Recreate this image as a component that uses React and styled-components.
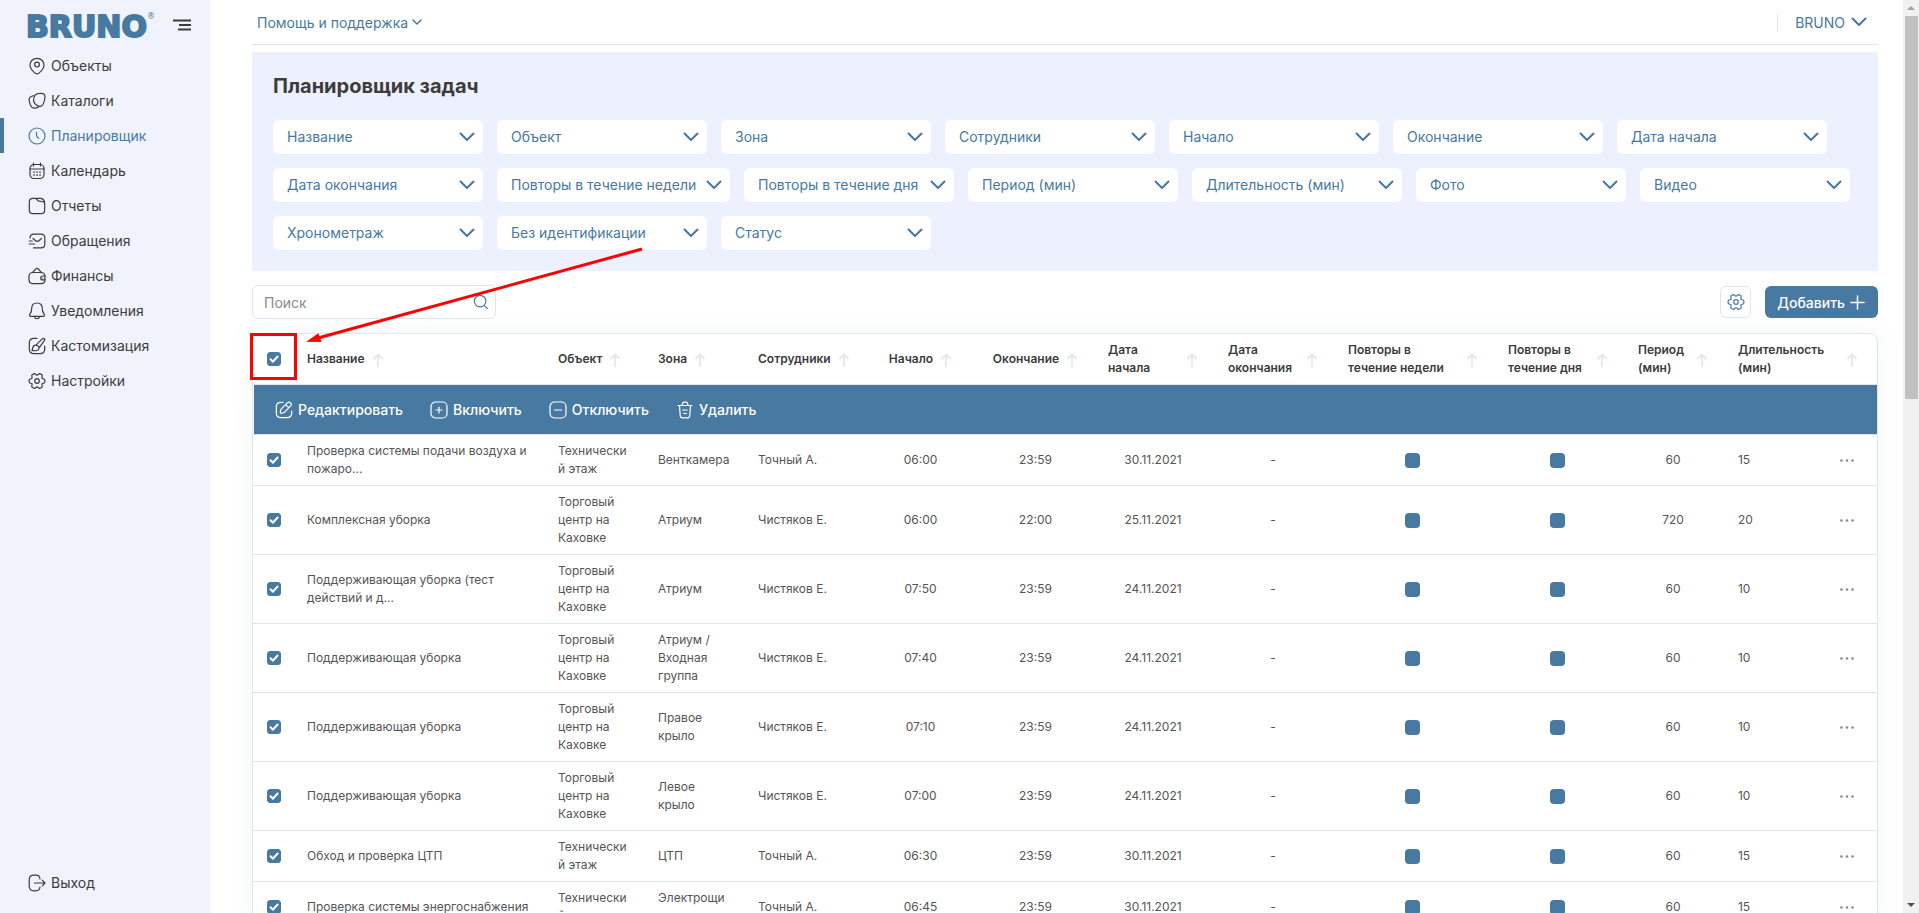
import React, { useState } from "react";
import styled, { createGlobalStyle, css } from "styled-components";

const blue = "#4879a1";
const line = "#dfe4ed";

const GlobalStyle = createGlobalStyle`
  * {
    box-sizing: border-box;
  }

  body {
    margin: 0;
    background: #fff;
    color: #3c3c3c;
    font-family: Inter, "Liberation Sans", sans-serif;
    font-size: 14px;
    overflow: hidden;
  }

  button, input, select {
    font: inherit;
    color: inherit;
  }

  button {
    cursor: pointer;
  }
`;

const Layout = styled.div`
  display: flex;
  height: 100vh;
`;

const Sidebar = styled.aside`
  display: flex;
  flex-direction: column;
  flex: 0 0 210px;
  padding-bottom: 13px;
  background: #f0f3fc;
`;

const Brand = styled.div`
  display: flex;
  align-items: center;
  justify-content: space-between;
  height: 48px;
  padding: 6px 19px 0 26px;
`;

const Logo = styled.a`
  display: flex;
  color: ${blue};
  font-family: "DejaVu Sans", sans-serif;
  font-size: 30px;
  font-weight: 700;
  line-height: 36px;
  text-decoration: none;
  -webkit-text-stroke: 2px ${blue};

  sup {
    font-size: 8px;
    font-weight: 400;
    line-height: 16px;
    -webkit-text-stroke: 0;
  }
`;

const PlainButton = styled.button`
  display: flex;
  align-items: center;
  padding: 0;
  border: 0;
  background: none;
`;

const Menu = styled.nav`
  display: flex;
  flex-direction: column;
  flex: 1;
`;

const MenuLink = styled.a`
  display: flex;
  align-items: center;
  gap: 5px;
  height: 35px;
  padding-left: 24px;
  border-left: 4px solid transparent;
  color: #3c3c3c;
  text-decoration: none;

  ${(props) =>
    props.$active &&
    css`
      border-left-color: ${blue};
      color: ${blue};
    `}

  ${(props) =>
    props.$last &&
    css`
      margin-top: auto;
    `}
`;

const Main = styled.main`
  position: relative;
  flex: 1;
  min-width: 0;
  padding: 0 25px 0 42px;
  overflow: hidden;
`;

const Topbar = styled.header`
  display: flex;
  align-items: center;
  justify-content: space-between;
  height: 45px;
  padding: 0 11px 0 5px;
  border-bottom: 1px solid ${line};
  color: ${blue};
`;

const TopbarButton = styled(PlainButton)`
  gap: ${(props) => props.$gap || 4}px;
`;

const Account = styled.div`
  display: flex;
  padding-left: 17px;
  border-left: 1px solid ${line};
`;

const FilterPanel = styled.section`
  margin-top: 7px;
  padding: 21px;
  background: #ecf1fd;

  h1 {
    margin: 0 0 21px;
    font-size: 20px;
    font-weight: 700;
    line-height: 26px;
  }
`;

const Filters = styled.div`
  display: flex;
  flex-wrap: wrap;
  gap: 14px;
`;

const Filter = styled.label`
  position: relative;
  display: flex;
  min-width: 210px;
  color: ${blue};

  select {
    flex: 1;
    height: 34px;
    padding: 0 33px 1px 14px;
    border: 0;
    border-radius: 6px;
    background: #fff;
    appearance: none;
  }

  svg {
    position: absolute;
    top: 10px;
    right: 8px;
    pointer-events: none;
  }
`;

const Toolbar = styled.div`
  display: flex;
  align-items: center;
  justify-content: space-between;
  margin: 14px 0;
`;

const Search = styled.label`
  display: flex;
  align-items: center;
  width: 244px;
  height: 34px;
  padding: 0 6px 0 11px;
  border: 1px solid ${line};
  border-radius: 6px;
  color: ${blue};

  input {
    flex: 1;
    min-width: 0;
    padding: 0;
    border: 0;
    outline: 0;
    background: none;
  }

  input::placeholder {
    color: #8a8a8a;
    opacity: 1;
  }
`;

const ToolbarActions = styled.div`
  display: flex;
  gap: 14px;
`;

const SettingsButton = styled.button`
  display: flex;
  align-items: center;
  justify-content: center;
  width: 31px;
  height: 32px;
  padding: 0;
  border: 1px solid ${line};
  border-radius: 6px;
  background: #fff;
  color: ${blue};
`;

const AddButton = styled.button`
  display: flex;
  align-items: center;
  gap: 5px;
  height: 32px;
  padding: 0 13px 0 12px;
  border: 0;
  border-radius: 6px;
  background: ${blue};
  color: #fff;
  font-weight: 500;
`;

const TableCard = styled.div`
  border: 1px solid ${line};
  border-radius: 8px;
  overflow: hidden;
  box-shadow: 0 0 24px rgba(120, 150, 140, 0.09);
`;

const Table = styled.table`
  width: 100%;
  border-collapse: separate;
  border-spacing: 0;
  table-layout: fixed;
  font-size: 12px;
  line-height: 18px;

  th, td {
    padding: 7px 0 7px 15px;
    border-bottom: 1px solid ${line};
    text-align: left;
    overflow-wrap: anywhere;
  }

  th {
    padding-right: 15px;
    font-weight: 600;
  }

  th:last-child {
    padding-right: 19px;
  }

  td {
    color: #555;
  }

  tbody tr:not(:first-child) td {
    padding-right: 12px;
  }
`;

const HeadCell = styled.div`
  display: flex;
  align-items: center;
  justify-content: ${(props) => (props.$center ? "center" : "flex-start")};
  gap: 7px;

  button {
    flex: none;
    margin-top: 2px;
  }
`;

const Title = styled.span`
  overflow-wrap: normal;
  ${(props) => props.$grow && "flex: 1;"}
`;

const Cell = styled.td`
  ${(props) =>
    props.$center &&
    css`
      && {
        padding-left: 12px;
        text-align: center;
      }
    `}
`;

const CheckCell = styled.td`
  && {
    padding: 0 0 0 14px;
  }
`;

const Checkbox = styled.input`
  display: block;
  width: 14px;
  height: 14px;
  margin: 0;
  border: 1px solid ${blue};
  border-radius: 3px;
  appearance: none;
  background: #fff;

  &:checked {
    background: ${blue}
      url("data:image/svg+xml,%3Csvg xmlns='http://www.w3.org/2000/svg' viewBox='0 0 12 12' fill='none' stroke='white' stroke-width='2' stroke-linecap='round' stroke-linejoin='round'%3E%3Cpath d='M2.5 6.3 5 8.7 9.6 3.5'/%3E%3C/svg%3E")
      center / 12px 12px no-repeat;
  }
`;

const BulkCell = styled.td`
  && {
    padding: 0 0 0 1px;
  }
`;

const BulkBar = styled.div`
  display: flex;
  align-items: center;
  gap: 27px;
  height: 49px;
  padding-left: 21px;
  background: ${blue};
  color: #fff;
  font-size: 14px;
  font-weight: 500;
`;

const BulkButton = styled(PlainButton)`
  gap: 5px;
`;

const Mark = styled.span`
  display: inline-block;
  width: 15px;
  height: 15px;
  border-radius: 4px;
  background: ${blue};
  vertical-align: middle;
`;

const MoreButton = styled(PlainButton)`
  margin: 0 auto;
  color: #8a8a8a;
`;

const Scrollbar = styled.div`
  display: flex;
  flex-direction: column;
  justify-content: space-between;
  align-items: center;
  flex: 0 0 16px;
  background: #f1f1f1;
  color: #a3a3a3;
`;

const Thumb = styled.div`
  flex: 0 0 42%;
  width: 13px;
  margin-bottom: auto;
  background: #c1c1c1;
`;

// red frame and arrow over the page
const Callout = styled.svg`
  position: absolute;
  top: 240px;
  left: 38px;
  pointer-events: none;
`;

const Icon = ({ size = 18, width = 1.2, children }) => (
  <svg
    width={size}
    height={size}
    viewBox="0 0 18 18"
    fill="none"
    stroke="currentColor"
    strokeWidth={width}
    strokeLinecap="round"
    strokeLinejoin="round"
    aria-hidden="true"
  >
    {children}
  </svg>
);

const Chevron = ({ small }) => (
  <svg width={small ? 10 : 16} height={small ? 6 : 14} viewBox={small ? "0 0 10 6" : "0 0 16 14"} fill="none" stroke="currentColor" strokeWidth={small ? 1.5 : 2} strokeLinecap="round" strokeLinejoin="round" aria-hidden="true">
    <path d={small ? "M1 1l4 4 4-4" : "M1.5 3.5L8 10l6.5-6.5"} />
  </svg>
);

// six-lobed cog outline
const gearPoints = Array.from({ length: 72 }, (_, i) => {
  const angle = (i * Math.PI) / 36;
  const radius = 7.1 + 1.1 * Math.cos(angle * 6) - 0.3 * Math.cos(angle * 12);
  return `${(9 + radius * Math.cos(angle)).toFixed(2)},${(9 + radius * Math.sin(angle)).toFixed(2)}`;
}).join(" ");

const icons = {
  pin: (
    <>
      <path d="M9 1.3c-4 0-7 2.9-7 6.7 0 3.7 3 6.400 5 8.100 1.200 1 2.800 1 4 0 2-1.700 5-4.400 5-8.100 0-3.800-3-6.700-7-6.700z" />
      <circle cx="9" cy="7.6" r="2.4" />
    </>
  ),
  catalog: (
    <>
      <path d="M9.300 1.800c2-.6 4-.6 5.700-.1 1.400.4 2 1.300 2 2.800-.1 3.300-.9 6.400-2.300 8.500-.8 1.200-2 1.600-3.300 1.300-2-.4-3.600-1.400-4.700-3-1.700-2.500-1-5.800.4-8.100.5-.8 1.200-1.200 2.200-1.400z" />
      <path d="M5.600 3.600C4 4.200 1.800 4.900 1.300 6.200c-.5 1.800.4 5.500 1.900 8.300 1.200 2.400 5 2 7.400.5" />
    </>
  ),
  clock: (
    <>
      <circle cx="9" cy="9" r="8" />
      <path d="M8.500 5.300v3.300c0 .8.3 1.300 2.300 2.800" />
    </>
  ),
  calendar: (
    <>
      <rect x="2" y="2.5" width="14" height="14" rx="4" />
      <path d="M2 7h14M5.500 1v3M12.500 1v3" />
      <path d="M6 10h.1M9 10h.1M12 10h.1M6 13h.1M9 13h.1M12 13h.1" strokeWidth="1.7" />
    </>
  ),
  report: (
    <path d="M9 1.300H5C2.500 1.300 1.300 2.500 1.300 5v8c0 2.500 1.200 3.700 3.700 3.700h8c2.500 0 3.700-1.200 3.700-3.700V6.500c0-3-1.700-5.200-4.700-5.200H7.500c1.500.4 1.600 2.700 3.500 2.900 2.200.2 4.900-.3 5.600 2" />
  ),
  mail: (
    <>
      <path d="M2 6c0-2.700 1.300-3.900 4-3.900h7c2.700 0 3.800 1.200 3.800 3.900v6c0 2.700-1.100 3.900-3.800 3.900H5.500M1.200 9h3M1.200 12h5.500" />
      <path d="M5 6.500l2 1.800c1.500 1.400 3 1.400 4.500 0l2-1.800" />
    </>
  ),
  wallet: (
    <>
      <path d="M5 5.500h8c2.500 0 4 1.400 4 4v3c0 2.700-1.500 4.200-4 4.200H5c-2.500 0-4-1.500-4-4.200v-3c0-2.600 1.500-4 4-4zM4.700 5.500l2.800-3.400c.9-.9 2.100-.9 3 0l2.800 3.400" />
      <path d="M17 9h-2.500c-2.400 0-2.400 3.900 0 3.900H17M14.700 11h.1" />
    </>
  ),
  bell: (
    <>
      <path d="M9 1C5.500 1 3.700 3.500 3.700 6.500c0 3-.6 4-1.800 5.600-.9 1.300-.2 2.300 1.100 2.300h12c1.300 0 2-1 1.100-2.300-1.200-1.600-1.800-2.600-1.800-5.600C14.300 3.500 12.500 1 9 1z" />
      <path d="M6.500 14.700c.4 2.700 4.600 2.700 5 0" />
    </>
  ),
  brush: (
    <>
      <path d="M9 1.300H6c-3.200 0-4.700 1.500-4.700 4.700v6c0 3.200 1.500 4.700 4.700 4.700h6c3.200 0 4.700-1.500 4.700-4.700V9" />
      <path d="M8 8.200l6-6c1.700-1.700 3.500-.3 2.300 1.500l-5 7M8 8.200c1.600.2 2.700 1.100 3.300 2.500M8 8.200c-2.300-.1-3 1.300-3.200 2.700-.1 1-.4 1.700-.9 2.400 3.500.9 7.200.6 7.400-2.600" />
    </>
  ),
  gear: (
    <>
      <polygon points={gearPoints} />
      <circle cx="9" cy="9" r="2.3" />
    </>
  ),
  exit: (
    <>
      <path d="M12 5C11.800 2.300 10.600 1.200 7.500 1.200H6C2.500 1.200 1.200 2.500 1.200 6v6c0 3.500 1.300 4.800 4.800 4.800h1.500c3.100 0 4.300-1.100 4.500-3.800" />
      <path d="M6.500 9H17M14.300 6.200L17 9l-2.700 2.800" />
    </>
  ),
  edit: (
    <>
      <path d="M8 1.300H6c-3.200 0-4.700 1.500-4.700 4.700v6c0 3.200 1.500 4.700 4.700 4.700h6c3.200 0 4.700-1.500 4.700-4.700V10" />
      <path d="M12 2.200L6.300 7.900c-.6.6-1.200 3.200-1 3.900.2.6 3.400.1 4-.5L15.200 5.400c1.500-1.500 1.400-2.600.2-3.600-1.200-1.200-2.200-.8-3.400.4zM11 3.300c.5 1.700 1.600 2.700 3.200 3.200" />
    </>
  ),
  plus: (
    <>
      <rect x="1" y="1" width="16" height="16" rx="4.5" />
      <path d="M6 9h6M9 6v6" />
    </>
  ),
  minus: (
    <>
      <rect x="1" y="1" width="16" height="16" rx="4.5" />
      <path d="M5.500 9h7" />
    </>
  ),
  trash: (
    <>
      <path d="M2 4.500h14M6 4.300l.5-2c.2-.9.5-1.200 1.300-1.200h2.400c.8 0 1.100.3 1.300 1.200l.5 2M3.500 5l.7 9.500c.1 1.500.8 2.300 2.300 2.300h5c1.500 0 2.200-.8 2.300-2.300L14.500 5" />
      <path d="M6.800 9h4.400M7.500 12.500h3" />
    </>
  ),
};

const menu = [
  { icon: "pin", label: "Объекты" },
  { icon: "catalog", label: "Каталоги" },
  { icon: "clock", label: "Планировщик", active: true },
  { icon: "calendar", label: "Календарь" },
  { icon: "report", label: "Отчеты" },
  { icon: "mail", label: "Обращения" },
  { icon: "wallet", label: "Финансы" },
  { icon: "bell", label: "Уведомления" },
  { icon: "brush", label: "Кастомизация" },
  { icon: "gear", label: "Настройки" },
];

const filters = [
  "Название", "Объект", "Зона", "Сотрудники", "Начало", "Окончание", "Дата начала",
  "Дата окончания", "Повторы в течение недели", "Повторы в течение дня", "Период (мин)",
  "Длительность (мин)", "Фото", "Видео", "Хронометраж", "Без идентификации", "Статус",
];

const columns = [
  { title: "Название" },
  { title: "Объект", width: 100 },
  { title: "Зона", width: 100 },
  { title: "Сотрудники", width: 120 },
  { title: "Начало", width: 115, center: true },
  { title: "Окончание", width: 115, center: true },
  { title: "Дата начала", width: 120, grow: true },
  { title: "Дата окончания", width: 120, grow: true },
  { title: "Повторы в течение недели", width: 160, grow: true },
  { title: "Повторы в течение дня", width: 130, grow: true },
  { title: "Период (мин)", width: 100, grow: true },
  { title: "Длительность (мин)", width: 94, grow: true },
];

const mall = "Торговый центр на Каховке";
const tech = "Технический этаж";

const tasks = [
  ["Проверка системы подачи воздуха и пожаро...", tech, "Венткамера", "Точный А.", "06:00", "23:59", "30.11.2021", 60, 15],
  ["Комплексная уборка", mall, "Атриум", "Чистяков Е.", "06:00", "22:00", "25.11.2021", 720, 20],
  ["Поддерживающая уборка (тест действий и д...", mall, "Атриум", "Чистяков Е.", "07:50", "23:59", "24.11.2021", 60, 10],
  ["Поддерживающая уборка", mall, "Атриум / Входная группа", "Чистяков Е.", "07:40", "23:59", "24.11.2021", 60, 10],
  ["Поддерживающая уборка", mall, "Правое крыло", "Чистяков Е.", "07:10", "23:59", "24.11.2021", 60, 10],
  ["Поддерживающая уборка", mall, "Левое крыло", "Чистяков Е.", "07:00", "23:59", "24.11.2021", 60, 10],
  ["Обход и проверка ЦТП", tech, "ЦТП", "Точный А.", "06:30", "23:59", "30.11.2021", 60, 15],
  ["Проверка системы энергоснабжения", tech, "Электрощи\u200Bтовая", "Точный А.", "06:45", "23:59", "30.11.2021", 60, 15],
];

const bulkActions = [
  { icon: "edit", label: "Редактировать" },
  { icon: "plus", label: "Включить" },
  { icon: "minus", label: "Отключить" },
  { icon: "trash", label: "Удалить" },
];

const TaskRow = ({ task, checked, onToggle }) => {
  const [name, object, zone, employee, start, end, date, period, duration] = task;

  return (
    <tr>
      <CheckCell>
        <Checkbox type="checkbox" aria-label={name} checked={checked} onChange={onToggle} />
      </CheckCell>
      <Cell>{name}</Cell>
      <Cell>{object}</Cell>
      <Cell>{zone}</Cell>
      <Cell>{employee}</Cell>
      <Cell $center>{start}</Cell>
      <Cell $center>{end}</Cell>
      <Cell $center>{date}</Cell>
      <Cell $center>-</Cell>
      <Cell $center><Mark /></Cell>
      <Cell $center><Mark /></Cell>
      <Cell $center>{period}</Cell>
      <Cell>{duration}</Cell>
      <Cell $center>
        <MoreButton type="button" aria-label="Действия">
          <svg width="14" height="3" viewBox="0 0 14 3" fill="currentColor">
            <circle cx="1.5" cy="1.5" r="1.3" />
            <circle cx="7" cy="1.5" r="1.3" />
            <circle cx="12.5" cy="1.5" r="1.3" />
          </svg>
        </MoreButton>
      </Cell>
    </tr>
  );
};

const App = () => {
  const [selected, setSelected] = useState(tasks.map(() => true));
  const allSelected = selected.every(Boolean);

  const toggle = (index) => setSelected(selected.map((value, i) => (i === index ? !value : value)));

  return (
    <Layout>
      <GlobalStyle />
      <Sidebar>
        <Brand>
          <Logo href="#">BRUNO<sup>®</sup></Logo>
          <PlainButton type="button" aria-label="Меню">
            <svg width="18" height="16" viewBox="0 0 18 16" fill="none" stroke="#3c3c3c" strokeWidth="1.8">
              <path d="M0 1.500h18M6 6h12M5 10.500h13" />
            </svg>
          </PlainButton>
        </Brand>
        <Menu>
          {menu.map(({ icon, label, active }) => (
            <MenuLink key={label} href="#" $active={active}>
              <Icon>{icons[icon]}</Icon>
              {label}
            </MenuLink>
          ))}
          <MenuLink href="#" $last>
            <Icon>{icons.exit}</Icon>
            Выход
          </MenuLink>
        </Menu>
      </Sidebar>

      <Main>
        <Topbar>
          <TopbarButton type="button">
            Помощь и поддержка
            <Chevron small />
          </TopbarButton>
          <Account>
            <TopbarButton type="button" $gap={6}>
              BRUNO
              <Chevron />
            </TopbarButton>
          </Account>
        </Topbar>

        <FilterPanel>
          <h1>Планировщик задач</h1>
          <Filters>
            {filters.map((label) => (
              <Filter key={label}>
                <select aria-label={label}>
                  <option>{label}</option>
                </select>
                <Chevron />
              </Filter>
            ))}
          </Filters>
        </FilterPanel>

        <Toolbar>
          <Search>
            <input type="text" placeholder="Поиск" aria-label="Поиск" />
            <Icon size={16} width={1.3}>
              <circle cx="8" cy="8" r="6.5" />
              <path d="M13 13l3.500 3.500" />
            </Icon>
          </Search>
          <ToolbarActions>
            <SettingsButton type="button" aria-label="Настройки таблицы">
              <Icon>{icons.gear}</Icon>
            </SettingsButton>
            <AddButton type="button">
              Добавить
              <svg width="15" height="15" viewBox="0 0 15 15" stroke="currentColor" strokeWidth="1.5" strokeLinecap="round">
                <path d="M7.500 1v13M1 7.500h13" />
              </svg>
            </AddButton>
          </ToolbarActions>
        </Toolbar>

        <TableCard>
          <Table>
            <colgroup>
              <col width="39" />
              {columns.map(({ title, width }) => (
                <col key={title} width={width} />
              ))}
              <col width="60" />
            </colgroup>
            <thead>
              <tr>
                <CheckCell as="th">
                  <Checkbox
                    type="checkbox"
                    aria-label="Выбрать все"
                    checked={allSelected}
                    onChange={() => setSelected(tasks.map(() => !allSelected))}
                  />
                </CheckCell>
                {columns.map(({ title, center, grow }, index) => (
                  <th key={title} colSpan={index === columns.length - 1 ? 2 : 1}>
                    <HeadCell $center={center}>
                      <Title $grow={grow}>{title}</Title>
                      <PlainButton type="button" aria-label="Сортировать">
                        <svg width="12" height="14" viewBox="0 0 12 14" fill="none" stroke="#e3e7f0" strokeWidth="1.8">
                          <path d="M6 14V1.500M1.500 6L6 1.500 10.500 6" />
                        </svg>
                      </PlainButton>
                    </HeadCell>
                  </th>
                ))}
              </tr>
            </thead>
            <tbody>
              <tr>
                <BulkCell colSpan={14}>
                  <BulkBar>
                    {bulkActions.map(({ icon, label }) => (
                      <BulkButton key={label} type="button">
                        <Icon>{icons[icon]}</Icon>
                        {label}
                      </BulkButton>
                    ))}
                  </BulkBar>
                </BulkCell>
              </tr>
              {tasks.map((task, index) => (
                <TaskRow key={index} task={task} checked={selected[index]} onToggle={() => toggle(index)} />
              ))}
            </tbody>
          </Table>
        </TableCard>

        <Callout width="400" height="150" viewBox="248 240 400 150" fill="none" stroke="#f00" strokeWidth="3">
          <rect x="251.5" y="334.5" width="44" height="44" />
          <path d="M642 249L318 338" />
          <path d="M306 341.700L318.500 333.300 321.500 342z" fill="#f00" stroke="none" />
        </Callout>
      </Main>

      <Scrollbar>
        <svg width="16" height="16" viewBox="0 0 16 16" fill="currentColor">
          <path d="M4 10l4-4 4 4z" />
        </svg>
        <Thumb />
        <svg width="16" height="16" viewBox="0 0 16 16" fill="#505050">
          <path d="M4 6l4 4 4-4z" />
        </svg>
      </Scrollbar>
    </Layout>
  );
};

export default App;
